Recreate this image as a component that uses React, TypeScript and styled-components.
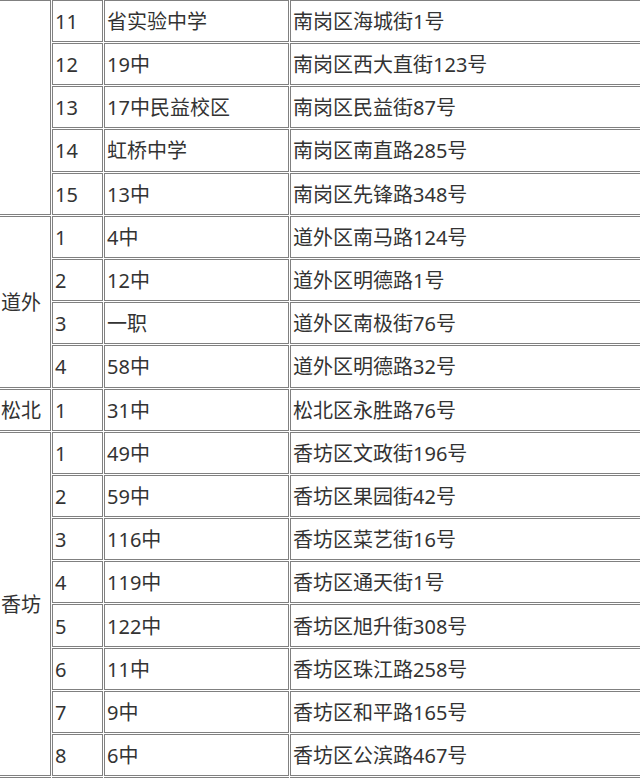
import React from "react";
import styled, { createGlobalStyle } from "styled-components";

const Global = createGlobalStyle`
  html, body { margin: 0; padding: 0; background: #ffffff; }
  body { overflow: hidden; }
`;

const Page = styled.div`
  width: 640px;
  height: 778px;
  overflow: hidden;
`;

const Table = styled.table`
  margin-top: -1.2px;
  margin-left: -3px;
  border-collapse: separate;
  border-spacing: 1px;
  table-layout: fixed;
  width: 695px;
  font-family: "Noto Sans", "Noto Sans CJK SC", sans-serif;
  font-size: 20px;
  color: #333333;
`;

const Col = styled.col<{ $w: number }>`
  width: ${(p) => p.$w}px;
`;

const Cell = styled.td`
  box-sizing: border-box;
  height: 42.2px;
  border: 1px solid #808080;
  padding: 2px 2px 0 2px;
  vertical-align: middle;
  white-space: nowrap;
  line-height: 24px;
  overflow: hidden;
`;

type School = [string, string, string];

const groups: { region: string; rows: School[] }[] = [
  {
    region: "",
    rows: [
      ["11", "省实验中学", "南岗区海城街1号"],
      ["12", "19中", "南岗区西大直街123号"],
      ["13", "17中民益校区", "南岗区民益街87号"],
      ["14", "虹桥中学", "南岗区南直路285号"],
      ["15", "13中", "南岗区先锋路348号"],
    ],
  },
  {
    region: "道外",
    rows: [
      ["1", "4中", "道外区南马路124号"],
      ["2", "12中", "道外区明德路1号"],
      ["3", "一职", "道外区南极街76号"],
      ["4", "58中", "道外区明德路32号"],
    ],
  },
  {
    region: "松北",
    rows: [["1", "31中", "松北区永胜路76号"]],
  },
  {
    region: "香坊",
    rows: [
      ["1", "49中", "香坊区文政街196号"],
      ["2", "59中", "香坊区果园街42号"],
      ["3", "116中", "香坊区菜艺街16号"],
      ["4", "119中", "香坊区通天街1号"],
      ["5", "122中", "香坊区旭升街308号"],
      ["6", "11中", "香坊区珠江路258号"],
      ["7", "9中", "香坊区和平路165号"],
      ["8", "6中", "香坊区公滨路467号"],
    ],
  },
  {
    region: "",
    rows: [["", "", ""]],
  },
];

export default function App() {
  return (
    <Page>
      <Global />
      <Table>
        <colgroup>
          <Col $w={53} />
          <Col $w={51} />
          <Col $w={185} />
          <Col $w={401} />
        </colgroup>
        <tbody>
          {groups.map((g, gi) =>
            g.rows.map((r, ri) => (
              <tr key={`${gi}-${ri}`}>
                {ri === 0 && <Cell rowSpan={g.rows.length}>{g.region}</Cell>}
                <Cell>{r[0]}</Cell>
                <Cell>{r[1]}</Cell>
                <Cell>{r[2]}</Cell>
              </tr>
            ))
          )}
        </tbody>
      </Table>
    </Page>
  );
}
